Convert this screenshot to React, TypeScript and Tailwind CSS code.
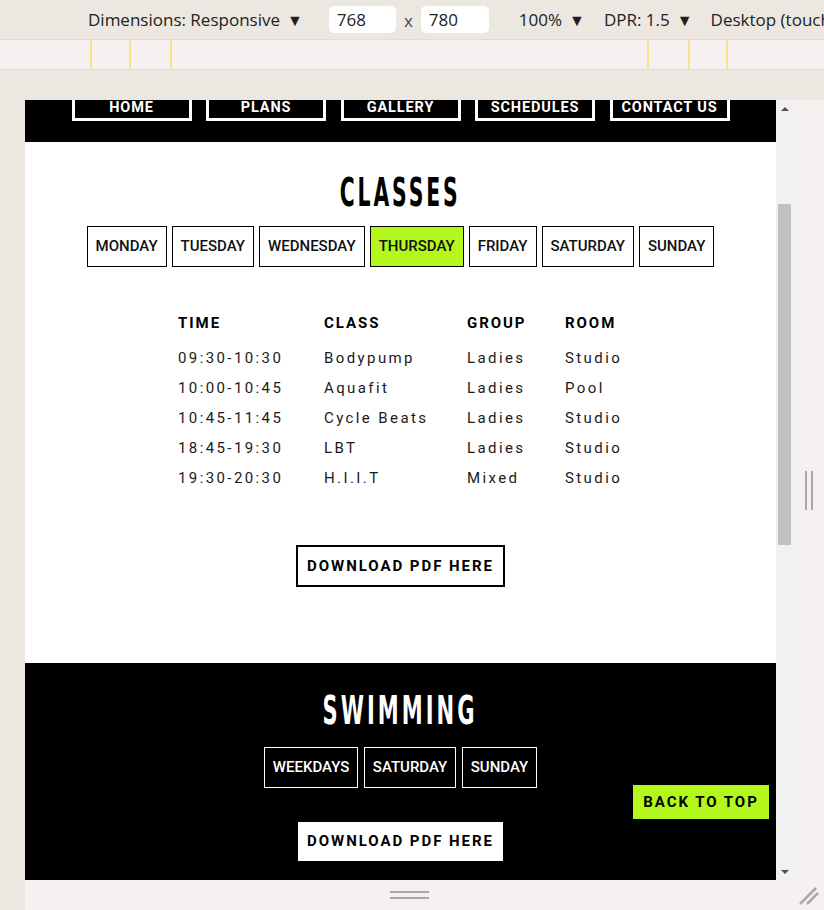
import React from "react";

const days = ["MONDAY", "TUESDAY", "WEDNESDAY", "THURSDAY", "FRIDAY", "SATURDAY", "SUNDAY"];
const nav = ["HOME", "PLANS", "GALLERY", "SCHEDULES", "CONTACT US"];
const rows = [
  ["09:30-10:30", "Bodypump", "Ladies", "Studio"],
  ["10:00-10:45", "Aquafit", "Ladies", "Pool"],
  ["10:45-11:45", "Cycle Beats", "Ladies", "Studio"],
  ["18:45-19:30", "LBT", "Ladies", "Studio"],
  ["19:30-20:30", "H.I.I.T", "Mixed", "Studio"],
];

function Tri() {
  return <span className="ml-[7px] text-[16px] text-[#202020]">▼</span>;
}

export default function App() {
  return (
    <div className="w-[824px] h-[910px] overflow-hidden flex flex-col bg-[#ece7e1] font-['Open_Sans',sans-serif]">
      {/* devtools toolbar */}
      <div className="h-[39px] flex items-center text-[17px] text-[#222] whitespace-nowrap overflow-hidden">
        <div className="shrink-0 ml-[88px] flex items-center">
          Dimensions: Responsive
          <Tri />
        </div>
        <div className="shrink-0 ml-[26px] w-[67px] h-[27px] rounded-[5px] bg-white flex items-center pl-[8px]">768</div>
        <div className="shrink-0 w-[25px] text-center pt-[3px] text-[#444]">x</div>
        <div className="shrink-0 w-[68px] h-[27px] rounded-[5px] bg-white flex items-center pl-[8px]">780</div>
        <div className="shrink-0 ml-[30px] flex items-center">
          100%
          <Tri />
        </div>
        <div className="shrink-0 ml-[19px] flex items-center">
          DPR: 1.5
          <Tri />
        </div>
        <div className="shrink-0 ml-[18px]">Desktop (touch)</div>
      </div>
      {/* ruler */}
      <div className="h-[31px] bg-[#f6f1f0] border-y border-[#f7df8e] flex">
        <div className="w-[90px]" />
        <div className="w-[2px] bg-[#fbe08a]" />
        <div className="w-[37px]" />
        <div className="w-[2px] bg-[#fbe08a]" />
        <div className="w-[39px]" />
        <div className="w-[2px] bg-[#fbe08a]" />
        <div className="w-[475px]" />
        <div className="w-[2px] bg-[#fbe08a]" />
        <div className="w-[39px]" />
        <div className="w-[2px] bg-[#fbe08a]" />
        <div className="w-[36px]" />
        <div className="w-[2px] bg-[#fbe08a]" />
      </div>
      <div className="h-[30px]" />
      <div className="flex-1 flex">
        <div className="w-[25px]" />
        <div className="flex-1 bg-[#f6f1f0] flex flex-col">
          <div className="h-[780px] flex">
            {/* viewport */}
            <div className="w-[751px] h-[780px] relative overflow-hidden bg-white font-['Roboto',sans-serif]">
              {/* header */}
              <div className="h-[42px] bg-black flex justify-center gap-[14.5px] overflow-hidden">
                {nav.map((n) => (
                  <div
                    key={n}
                    className="-mt-[6px] w-[120px] h-[27px] border-[3px] border-white text-white font-bold text-[14.5px] tracking-[0.06em] flex items-center justify-center pt-[1px]"
                  >
                    {n}
                  </div>
                ))}
              </div>
              {/* classes */}
              <div className="h-[521px] flex flex-col items-center">
                <div className="mt-[26px] h-[50px] flex items-center justify-center">
                  <span className="inline-block scale-x-[0.58] font-['DejaVu_Sans_Condensed',sans-serif] font-bold text-[39px] tracking-[5px] text-black">
                    CLASSES
                  </span>
                </div>
                <div className="mt-[8px] flex gap-[5px]">
                  {days.map((d) => (
                    <div
                      key={d}
                      className={`h-[41px] px-[8px] border border-black flex items-center text-[15px] font-medium text-[#111] ${
                        d === "THURSDAY" ? "bg-[#b3f71d]" : "bg-white"
                      }`}
                    >
                      {d}
                    </div>
                  ))}
                </div>
                <div className="mt-[41px] grid grid-cols-[146px_143px_98px_58px] text-[15px] text-[#1a1a1a] tracking-[0.16em]">
                  {["TIME", "CLASS", "GROUP", "ROOM"].map((h) => (
                    <div key={h} className="h-[30px] flex items-center font-bold text-black tracking-[0.13em]">
                      {h}
                    </div>
                  ))}
                  <div className="col-span-4 h-[5px]" />
                  {rows.map((r) =>
                    r.map((c, i) => (
                      <div key={r[0] + i} className="h-[30px] flex items-center whitespace-nowrap">
                        {c}
                      </div>
                    ))
                  )}
                </div>
                <div className="mt-[52px] h-[42px] px-[9px] border-2 border-black flex items-center text-[15px] font-bold tracking-[0.13em] text-black">
                  DOWNLOAD PDF HERE
                </div>
              </div>
              {/* swimming */}
              <div className="h-[300px] bg-black flex flex-col items-center">
                <div className="mt-[23px] h-[50px] flex items-center justify-center">
                  <span className="inline-block scale-x-[0.6] font-['DejaVu_Sans_Condensed',sans-serif] font-bold text-[39px] tracking-[5px] text-white">
                    SWIMMING
                  </span>
                </div>
                <div className="mt-[11px] flex gap-[5.5px]">
                  {["WEEKDAYS", "SATURDAY", "SUNDAY"].map((d) => (
                    <div
                      key={d}
                      className="h-[41px] px-[8px] border border-white flex items-center text-[15px] font-medium text-white"
                    >
                      {d}
                    </div>
                  ))}
                </div>
                <div className="mt-[34px] h-[39px] px-[9px] bg-white flex items-center text-[15px] font-bold tracking-[0.13em] text-black">
                  DOWNLOAD PDF HERE
                </div>
              </div>
              {/* back to top */}
              <div className="absolute right-[7px] bottom-[61px] w-[136px] h-[34px] bg-[#b3f71d] flex items-center justify-center text-[15px] font-bold tracking-[0.13em] text-black">
                BACK TO TOP
              </div>
            </div>
            {/* scrollbar */}
            <div className="w-[17px] h-[780px] bg-[#f1f1f1] flex flex-col items-center">
              <div className="h-[17px] flex items-center justify-center">
                <div className="w-0 h-0 border-x-[4px] border-x-transparent border-b-[4px] border-b-[#505050]" />
              </div>
              <div className="mt-[87px] w-[13px] h-[341px] bg-[#c1c1c1]" />
              <div className="flex-1" />
              <div className="h-[17px] flex items-center justify-center">
                <div className="w-0 h-0 border-x-[4px] border-x-transparent border-t-[4px] border-t-[#505050]" />
              </div>
            </div>
            <div className="flex-1 flex items-center justify-center">
              <div className="flex gap-[4px]">
                <div className="w-[2px] h-[39px] bg-[#a9a9a9]" />
                <div className="w-[2px] h-[39px] bg-[#a9a9a9]" />
              </div>
            </div>
          </div>
          <div className="flex-1 relative flex">
            <div className="w-[768px] flex flex-col items-center justify-center gap-[4px]">
              <div className="w-[39px] h-[2px] bg-[#a9a9a9]" />
              <div className="w-[39px] h-[2px] bg-[#a9a9a9]" />
            </div>
            <svg className="absolute right-[4px] bottom-[4px]" width="22" height="22" viewBox="0 0 22 22">
              <line x1="2" y1="20" x2="18" y2="4" stroke="#a9a9a9" strokeWidth="2.5" />
              <line x1="9" y1="20" x2="20" y2="9" stroke="#a9a9a9" strokeWidth="2.5" />
            </svg>
          </div>
        </div>
      </div>
    </div>
  );
}
